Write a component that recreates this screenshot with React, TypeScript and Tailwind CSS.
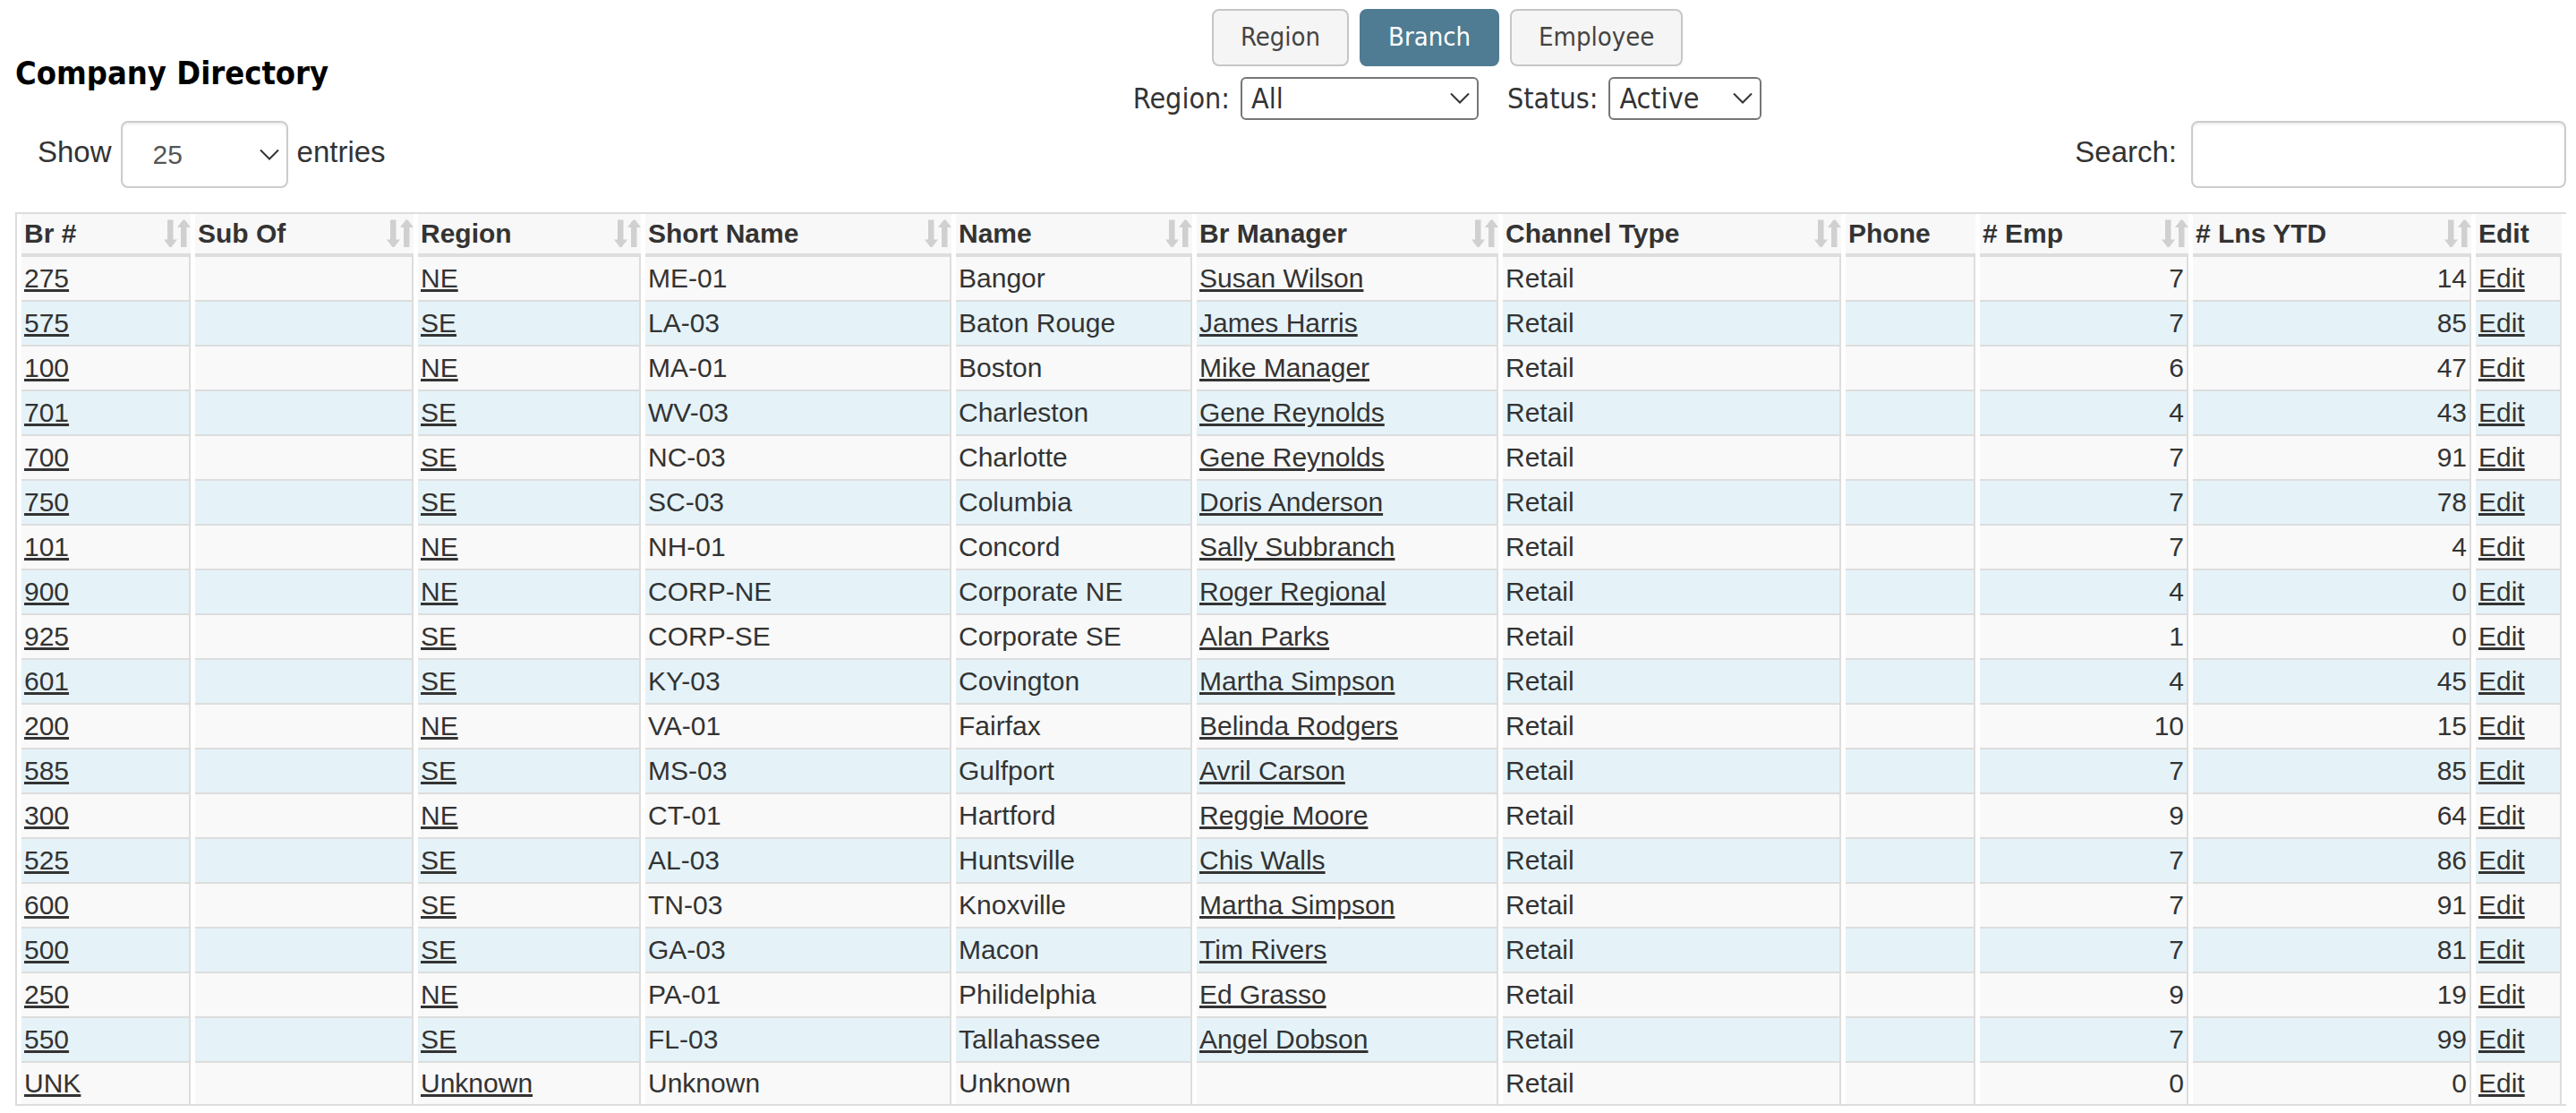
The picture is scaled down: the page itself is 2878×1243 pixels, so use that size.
import React, { useState } from 'react';

interface Branch {
  num: string;
  region: string;
  shortName: string;
  name: string;
  manager: string;
  employees: number;
  loans: number;
}

interface Column {
  label: string;
  width: number;
  sortable: boolean;
}

const TABS = ['Region', 'Branch', 'Employee'];

const COLUMNS: Column[] = [
  { label: 'Br #', width: 189, sortable: true },
  { label: 'Sub Of', width: 244, sortable: true },
  { label: 'Region', width: 249, sortable: true },
  { label: 'Short Name', width: 342, sortable: true },
  { label: 'Name', width: 264, sortable: true },
  { label: 'Br Manager', width: 337, sortable: true },
  { label: 'Channel Type', width: 378, sortable: true },
  { label: 'Phone', width: 145, sortable: false },
  { label: '# Emp', width: 233, sortable: true },
  { label: '# Lns YTD', width: 311, sortable: true },
  { label: 'Edit', width: 96, sortable: false },
];

const BRANCHES: Branch[] = [
  { num: '275', region: 'NE', shortName: 'ME-01', name: 'Bangor', manager: 'Susan Wilson', employees: 7, loans: 14 },
  { num: '575', region: 'SE', shortName: 'LA-03', name: 'Baton Rouge', manager: 'James Harris', employees: 7, loans: 85 },
  { num: '100', region: 'NE', shortName: 'MA-01', name: 'Boston', manager: 'Mike Manager', employees: 6, loans: 47 },
  { num: '701', region: 'SE', shortName: 'WV-03', name: 'Charleston', manager: 'Gene Reynolds', employees: 4, loans: 43 },
  { num: '700', region: 'SE', shortName: 'NC-03', name: 'Charlotte', manager: 'Gene Reynolds', employees: 7, loans: 91 },
  { num: '750', region: 'SE', shortName: 'SC-03', name: 'Columbia', manager: 'Doris Anderson', employees: 7, loans: 78 },
  { num: '101', region: 'NE', shortName: 'NH-01', name: 'Concord', manager: 'Sally Subbranch', employees: 7, loans: 4 },
  { num: '900', region: 'NE', shortName: 'CORP-NE', name: 'Corporate NE', manager: 'Roger Regional', employees: 4, loans: 0 },
  { num: '925', region: 'SE', shortName: 'CORP-SE', name: 'Corporate SE', manager: 'Alan Parks', employees: 1, loans: 0 },
  { num: '601', region: 'SE', shortName: 'KY-03', name: 'Covington', manager: 'Martha Simpson', employees: 4, loans: 45 },
  { num: '200', region: 'NE', shortName: 'VA-01', name: 'Fairfax', manager: 'Belinda Rodgers', employees: 10, loans: 15 },
  { num: '585', region: 'SE', shortName: 'MS-03', name: 'Gulfport', manager: 'Avril Carson', employees: 7, loans: 85 },
  { num: '300', region: 'NE', shortName: 'CT-01', name: 'Hartford', manager: 'Reggie Moore', employees: 9, loans: 64 },
  { num: '525', region: 'SE', shortName: 'AL-03', name: 'Huntsville', manager: 'Chis Walls', employees: 7, loans: 86 },
  { num: '600', region: 'SE', shortName: 'TN-03', name: 'Knoxville', manager: 'Martha Simpson', employees: 7, loans: 91 },
  { num: '500', region: 'SE', shortName: 'GA-03', name: 'Macon', manager: 'Tim Rivers', employees: 7, loans: 81 },
  { num: '250', region: 'NE', shortName: 'PA-01', name: 'Philidelphia', manager: 'Ed Grasso', employees: 9, loans: 19 },
  { num: '550', region: 'SE', shortName: 'FL-03', name: 'Tallahassee', manager: 'Angel Dobson', employees: 7, loans: 99 },
  { num: 'UNK', region: 'Unknown', shortName: 'Unknown', name: 'Unknown', manager: '', employees: 0, loans: 0 },
];

function SortIcon() {
  return (
    <svg width="30" height="32" viewBox="0 0 30 32" fill="#d0d0d0" className="shrink-0" aria-hidden="true">
      <path d="M4 0.5h6.5V22.500h4.500L8.500 31h-2L0 22.500h4z" />
      <path d="M19 31h6.500V9H30L23.500 0.500h-2L15 9h4z" />
    </svg>
  );
}

function Chevron() {
  return (
    <svg
      width="22"
      height="14"
      viewBox="0 0 22 14"
      fill="none"
      stroke="#333"
      strokeWidth="2"
      className="pointer-events-none absolute right-[10px] top-1/2 -translate-y-1/2"
      aria-hidden="true"
    >
      <path d="M1 1.500l10 10L21 1.500" />
    </svg>
  );
}

function CellLink({ children }: { children: React.ReactNode }) {
  return (
    <a href="#" className="underline decoration-3 underline-offset-2">
      {children}
    </a>
  );
}

function Cell({ children, numeric = false }: { children?: React.ReactNode; numeric?: boolean }) {
  return (
    <td
      className={`h-[50px] border-r-2 border-b-2 border-[#ddd] px-[3px] leading-[48px] whitespace-nowrap group-last:h-[46px] group-last:border-b-0 group-last:leading-[46px] ${
        numeric ? 'text-right' : ''
      }`}
    >
      {children}
    </td>
  );
}

export default function App() {
  const [tab, setTab] = useState('Branch');
  const [search, setSearch] = useState('');

  const rows = BRANCHES.filter((b) =>
    `${b.num} ${b.region} ${b.shortName} ${b.name} ${b.manager}`.toLowerCase().includes(search.toLowerCase())
  );

  return (
    <main className="bg-white pt-[10px] pr-[11px] pl-[17px] font-['Liberation_Sans',Arial,sans-serif] text-[30px] text-[#333]">
      <header className="flex items-center font-['DejaVu_Sans_Condensed','DejaVu_Sans',sans-serif]">
        <h1 className="pt-5 text-4xl font-bold whitespace-nowrap text-black">Company Directory</h1>
        <div className="flex flex-1 flex-col items-center gap-3">
          <div className="flex gap-3">
            {TABS.map((t) => (
              <button
                key={t}
                onClick={() => setTab(t)}
                className={`h-16 rounded-lg border-2 px-[30px] text-[29px] ${
                  t === tab ? 'border-[#4f7c93] bg-[#4f7c93] text-white' : 'border-[#c6c6c6] bg-[#f5f5f5] text-[#444]'
                }`}
              >
                {t}
              </button>
            ))}
          </div>
          <div className="flex items-center text-[32px] leading-[48px]">
            <label htmlFor="region" className="mr-3">
              Region:
            </label>
            <div className="relative mr-8">
              <select
                id="region"
                className="block h-12 w-[266px] appearance-none rounded-md border-2 border-[#767676] bg-white pl-[10px] leading-none"
              >
                <option>All</option>
                <option>NE</option>
                <option>SE</option>
              </select>
              <Chevron />
            </div>
            <label htmlFor="status" className="mr-3">
              Status:
            </label>
            <div className="relative">
              <select
                id="status"
                className="block h-12 w-[171px] appearance-none rounded-md border-2 border-[#767676] bg-white pl-[10px] leading-none"
              >
                <option>Active</option>
                <option>Inactive</option>
              </select>
              <Chevron />
            </div>
          </div>
        </div>
      </header>

      <div className="mt-px flex items-center justify-between pl-[25px] text-[33px]">
        <div className="flex items-center">
          <label htmlFor="pageSize" className="mr-[10px] pb-1.5">
            Show
          </label>
          <div className="relative mr-[10px]">
            <select
              id="pageSize"
              defaultValue="25"
              className="block h-[75px] w-[187px] appearance-none rounded-lg border-2 border-[#ccc] bg-white pl-[34px] text-[30px] text-[#555] shadow-[inset_0_2px_3px_rgba(0,0,0,0.075)]"
            >
              <option>10</option>
              <option>25</option>
              <option>50</option>
            </select>
            <Chevron />
          </div>
          <span className="pb-1.5">entries</span>
        </div>
        <div className="flex items-center">
          <label htmlFor="search" className="mr-4 pb-1.5">
            Search:
          </label>
          <input
            id="search"
            type="text"
            value={search}
            onChange={(e) => setSearch(e.target.value)}
            className="block h-[75px] w-[419px] rounded-lg border-2 border-[#ccc] bg-white px-4 text-[30px] shadow-[inset_0_2px_3px_rgba(0,0,0,0.075)]"
          />
        </div>
      </div>

      <table className="mt-[27px] w-full table-fixed border-separate border-spacing-x-[5px] border-spacing-y-0 border-y-2 border-l-2 border-[#ddd]">
        <colgroup>
          {COLUMNS.map((c) => (
            <col key={c.label} style={{ width: c.width }} />
          ))}
        </colgroup>
        <thead>
          <tr className="bg-[#f8f8f8]">
            {COLUMNS.map((c) => (
              <th key={c.label} className="h-12 border-b-4 border-[#ddd] p-0 pl-[3px] text-left font-bold whitespace-nowrap">
                <div className="flex h-11 items-center justify-between leading-[44px]">
                  {c.label}
                  {c.sortable && <SortIcon />}
                </div>
              </th>
            ))}
          </tr>
        </thead>
        <tbody>
          {rows.map((b) => (
            <tr key={b.num} className="group odd:bg-[#f9f9f9] even:bg-[#e5f3f9]">
              <Cell>
                <CellLink>{b.num}</CellLink>
              </Cell>
              <Cell />
              <Cell>
                <CellLink>{b.region}</CellLink>
              </Cell>
              <Cell>{b.shortName}</Cell>
              <Cell>{b.name}</Cell>
              <Cell>{b.manager && <CellLink>{b.manager}</CellLink>}</Cell>
              <Cell>Retail</Cell>
              <Cell />
              <Cell numeric>{b.employees}</Cell>
              <Cell numeric>{b.loans}</Cell>
              <Cell>
                <CellLink>Edit</CellLink>
              </Cell>
            </tr>
          ))}
        </tbody>
      </table>
    </main>
  );
}
